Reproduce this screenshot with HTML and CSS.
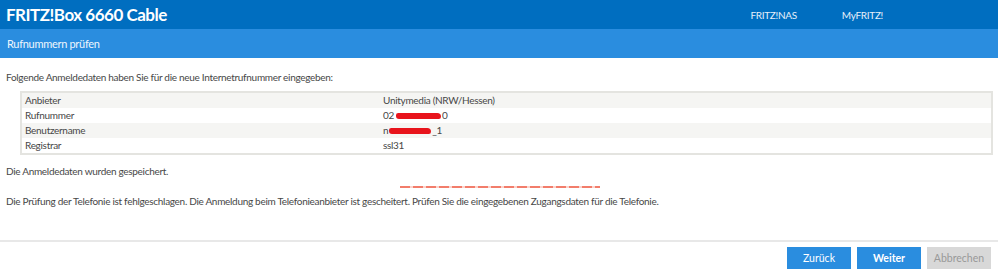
FILE: index.html
```html
<!DOCTYPE html>
<html>
<head>
    <link rel="stylesheet" href="styles.css">
</head>
<body>
    <header class="topbar">
        <div class="brand">FRITZ!Box 6660 Cable</div>
        <nav class="topnav">
            <a href="#">FRITZ!NAS</a>
            <a href="#">MyFRITZ!</a>
        </nav>
    </header>

    <div class="subbar">Rufnummern prüfen</div>

    <main class="content">
        <p class="intro">Folgende Anmeldedaten haben Sie für die neue Internetrufnummer eingegeben:</p>

        <table class="data">
            <tr>
                <td class="key">Anbieter</td>
                <td>Unitymedia (NRW/Hessen)</td>
            </tr>
            <tr>
                <td class="key">Rufnummer</td>
                <td>02<span class="redact r1"></span>0</td>
            </tr>
            <tr>
                <td class="key">Benutzername</td>
                <td>n<span class="redact r2"></span>_1</td>
            </tr>
            <tr>
                <td class="key">Registrar</td>
                <td>ssl31</td>
            </tr>
        </table>

        <p class="saved">Die Anmeldedaten wurden gespeichert.</p>
        <div class="dashline"></div>
        <p class="error">Die Prüfung der Telefonie ist fehlgeschlagen. Die Anmeldung beim Telefonieanbieter ist gescheitert. Prüfen Sie die eingegebenen Zugangsdaten für die Telefonie.</p>
    </main>

    <footer class="actions">
        <button class="btn">Zurück</button>
        <button class="btn primary">Weiter</button>
        <button class="btn disabled">Abbrechen</button>
    </footer>
</body>
</html>
```

FILE: styles.css
```css
body {
    margin: 0;
    font-family: "Lato", "Noto Sans", sans-serif;
    font-size: 10px;
    letter-spacing: -0.3px;
    color: #474747;
    background: #fff;
}

.topbar {
    height: 29px;
    background-color: #006ec0;
    display: flex;
    align-items: center;
    justify-content: space-between;
    padding: 0 6px;
}

.brand {
    color: #fff;
    font-size: 17px;
    font-weight: bold;
    letter-spacing: -0.5px;
}

.topnav {
    display: flex;
    gap: 45px;
    margin-right: 109px;
}

.topnav a {
    color: #e6f0fa;
    text-decoration: none;
    font-size: 10px;
}

.subbar {
    height: 29px;
    background-color: #2a8ddf;
    color: #eef6fd;
    font-size: 11px;
    display: flex;
    align-items: center;
    padding: 0 7px;
}

.content {
    box-sizing: border-box;
    padding: 13px 6px 0;
    height: 182px;
}

.intro {
    margin: 0 0 8px;
}

.data {
    margin-left: 14px;
    width: 973px;
    border-collapse: collapse;
    border: 2px solid #e4e4e0;
}

.data td {
    padding: 0 3px;
    height: 15px;
    line-height: 15px;
}

.data tr:nth-child(odd) td {
    background-color: #f5f5f3;
}

.data td.key {
    width: 352px;
}

.redact {
    display: inline-block;
    height: 6px;
    background: #e8141c;
    border-radius: 3px 5px 3px 4px;
    vertical-align: middle;
}

.r1 { width: 45px; margin: 0 1px 0 2px; }
.r2 { width: 42px; margin: 0 1px 0 1px; }

.saved {
    margin: 10px 0 0;
}

.dashline {
    margin: 9px 0 0 394px;
    width: 200px;
    height: 2px;
    background: repeating-linear-gradient(90deg, #f27d6b 0 10px, #fbd3cb 10px 13px);
}

.error {
    margin: 7px 0 0;
}

.actions {
    border-top: 2px solid #e8e8e8;
    display: flex;
    justify-content: flex-end;
    gap: 6px;
    padding: 5px 7px 0;
}

.btn {
    width: 64px;
    height: 22px;
    border: none;
    background-color: #2a8ddf;
    color: #fff;
    font-family: "Lato", sans-serif;
    font-size: 10.5px;
    padding: 0;
}

.btn.primary {
    font-weight: bold;
}

.btn.disabled {
    background-color: #d8d8d8;
    color: #999;
}
```
